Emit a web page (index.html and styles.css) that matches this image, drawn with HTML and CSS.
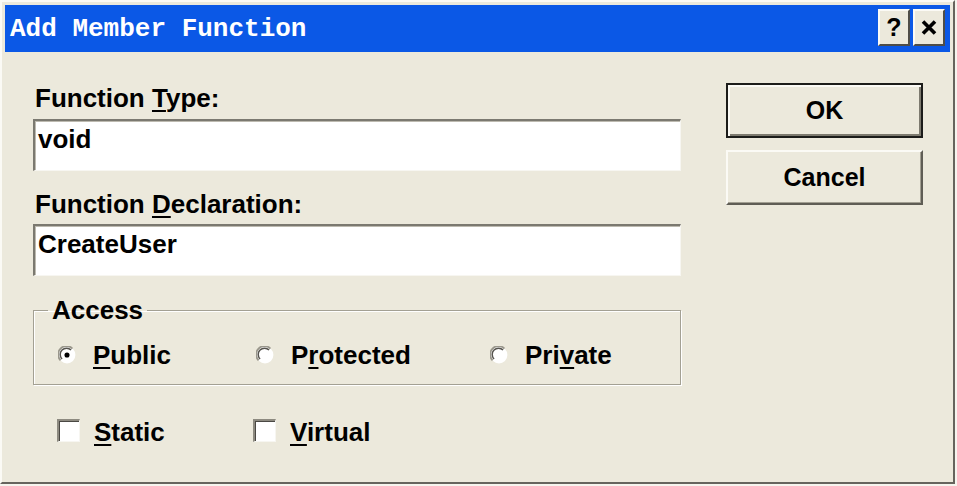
FILE: index.html
```html
<!DOCTYPE html>
<html lang="en">
<head>
  <meta charset="UTF-8">
  <title>Add Member Function</title>
  <link rel="stylesheet" href="styles.css">
</head>
<body>
<div class="dialog">
  <div class="titlebar">
    <span class="title">Add Member Function</span>
    <div class="caption-btns">
      <span class="cbtn help">?</span>
      <span class="cbtn close">
        <svg width="16" height="15" viewBox="0 0 16 15"><path d="M2 1.5 L14 13.5 M14 1.5 L2 13.5" stroke="#000" stroke-width="3.6" fill="none"/></svg>
      </span>
    </div>
  </div>
  <div class="body">
    <div class="form">
      <div class="field-label">Function <u>T</u>ype:</div>
      <div class="textbox">void</div>
      <div class="field-label second">Function <u>D</u>eclaration:</div>
      <div class="textbox">CreateUser</div>

      <fieldset class="group">
        <legend>Access</legend>
        <div class="radios">
          <span class="radio">
            <svg width="18" height="18" viewBox="0 0 12 12">
              <circle cx="6" cy="6" r="5.6" fill="#fff"/>
              <path d="M1.7 9.6 A5.4 5.4 0 0 1 9.6 1.7" stroke="#9a978c" stroke-width="1.2" fill="none"/>
              <path d="M2.7 8.7 A4.2 4.2 0 0 1 8.7 2.7" stroke="#55534d" stroke-width="1" fill="none"/>
              <circle cx="6" cy="6" r="1.7" fill="#000"/>
            </svg>
            <span><u>P</u>ublic</span>
          </span>
          <span class="radio">
            <svg width="18" height="18" viewBox="0 0 12 12">
              <circle cx="6" cy="6" r="5.6" fill="#fff"/>
              <path d="M1.7 9.6 A5.4 5.4 0 0 1 9.6 1.7" stroke="#9a978c" stroke-width="1.2" fill="none"/>
              <path d="M2.7 8.7 A4.2 4.2 0 0 1 8.7 2.7" stroke="#55534d" stroke-width="1" fill="none"/>
            </svg>
            <span>P<u>r</u>otected</span>
          </span>
          <span class="radio">
            <svg width="18" height="18" viewBox="0 0 12 12">
              <circle cx="6" cy="6" r="5.6" fill="#fff"/>
              <path d="M1.7 9.6 A5.4 5.4 0 0 1 9.6 1.7" stroke="#9a978c" stroke-width="1.2" fill="none"/>
              <path d="M2.7 8.7 A4.2 4.2 0 0 1 8.7 2.7" stroke="#55534d" stroke-width="1" fill="none"/>
            </svg>
            <span>Pri<u>v</u>ate</span>
          </span>
        </div>
      </fieldset>

      <div class="checks">
        <span class="check"><span class="box"></span><span><u>S</u>tatic</span></span>
        <span class="check"><span class="box"></span><span><u>V</u>irtual</span></span>
      </div>
    </div>

    <div class="actions">
      <button class="btn default">OK</button>
      <button class="btn">Cancel</button>
    </div>
  </div>
</div>
</body>
</html>
```

FILE: styles.css
```css
body {
  margin: 0;
  background: #f6f4ee;
  font-family: "Liberation Sans", Arial, sans-serif;
  font-weight: bold;
  font-size: 26px;
  color: #000;
}
.dialog {
  width: 955px;
  height: 484px;
  box-sizing: border-box;
  border: 2px solid;
  border-color: #fbfaf5 #66645d #66645d #fbfaf5;
  padding: 3px;
  background: #ece9dc;
}
.titlebar {
  height: 47px;
  background: #0b58e6;
  display: flex;
  align-items: center;
  justify-content: space-between;
  padding: 0 5px 0 5px;
}
.title {
  font-family: "Liberation Mono", "DejaVu Sans Mono", monospace;
  font-size: 26px;
  color: #fff;
  margin-top: 1px;
}
.caption-btns {
  display: flex;
  gap: 3px;
  margin-bottom: 3px;
}
.cbtn {
  width: 32px;
  height: 37px;
  box-sizing: border-box;
  background: #ece9dc;
  border: 2px solid;
  border-color: #fbfaf5 #4f4d47 #4f4d47 #fbfaf5;
  display: flex;
  align-items: center;
  justify-content: center;
  font-size: 25px;
  line-height: 1;
}
.body {
  display: flex;
  padding: 31px 0 0 28px;
}
.form {
  width: 648px;
}
.field-label {
  line-height: 30px;
  margin-bottom: 6px;
  padding-left: 2px;
}
.field-label.second {
  margin-top: 18px;
  margin-bottom: 5px;
}
u {
  text-decoration-thickness: 2px;
  text-underline-offset: 3px;
}
.textbox {
  height: 52px;
  box-sizing: border-box;
  background: #fff;
  border-style: solid;
  border-width: 2px 1px 1px 2px;
  border-color: #7b7970 #f7f6f1 #f7f6f1 #7b7970;
  box-shadow: inset 1px 1px 0 #bdbab0;
  padding: 3px 3px 1px;
  line-height: 30px;
}
.group {
  margin: 19px 0 0 0;
  padding: 15px 0 14px 0;
  border: 1px solid #a3a093;
  box-shadow: inset 1px 1px 0 #fff, 1px 1px 0 #fff;
  min-width: 0;
}
.group legend {
  margin-left: 14px;
  padding: 0 4px 0 4px;
  line-height: 30px;
}
.radios {
  display: grid;
  grid-template-columns: 198px 234px auto;
  padding-left: 24px;
  line-height: 30px;
}
.radio {
  display: flex;
  align-items: center;
  gap: 17px;
}
.radio svg {
  flex: none;
}
.checks {
  display: grid;
  grid-template-columns: 196px auto;
  margin-top: 32px;
  padding-left: 24px;
  line-height: 30px;
}
.check {
  display: flex;
  align-items: flex-start;
  gap: 14px;
}
.box {
  width: 23px;
  height: 23px;
  box-sizing: border-box;
  background: #fff;
  border-style: solid;
  border-width: 2px 1px 1px 2px;
  border-color: #8d8a80 #f7f6f1 #f7f6f1 #8d8a80;
  box-shadow: inset 1px 1px 0 #4a4843;
  margin-top: 2px;
}
.actions {
  display: flex;
  flex-direction: column;
  gap: 12px;
  margin-left: 45px;
}
.btn {
  width: 197px;
  height: 55px;
  box-sizing: border-box;
  background: #ece9dc;
  font-family: "Liberation Sans", Arial, sans-serif;
  font-weight: bold;
  font-size: 25px;
  color: #000;
  border: 2px solid;
  border-color: #fbfaf5 #5f5d55 #5f5d55 #fbfaf5;
  box-shadow: inset -1px -1px 0 #a3a093;
  padding: 0;
}
.btn.default {
  border: 2px solid #1c1c1a;
  box-shadow: inset 2px 2px 0 #fbfaf5, inset -2px -2px 0 #7d7a6f;
}
```
